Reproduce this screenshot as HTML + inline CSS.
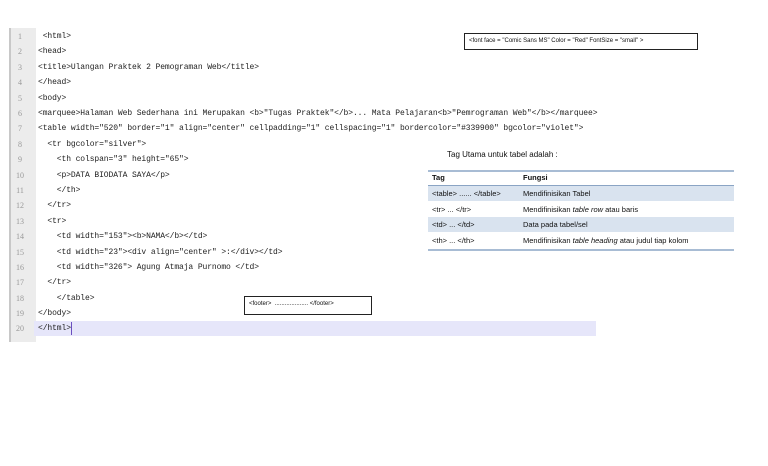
<!DOCTYPE html>
<html><head><meta charset="utf-8"><style>
body{margin:0;width:768px;height:466px;background:#fff;position:relative;overflow:hidden;font-family:"Liberation Sans",sans-serif}
.gut{position:absolute;left:9px;top:28px;width:25px;height:314px;background:#ececec;border-left:2px solid #c8c8c8}
.hl{position:absolute;left:34px;top:321px;width:562px;height:15px;background:#e6e6fa}
.ln{position:absolute;left:11px;width:18px;text-align:center;font:8px "Liberation Serif",serif;color:#999}
.cd{position:absolute;left:38px;font:8px "Liberation Mono",monospace;letter-spacing:-0.1px;color:#222;white-space:pre}
.box{position:absolute;border:1px solid #222;font-size:6px;color:#111;white-space:pre;box-sizing:border-box;padding:4px 4px}
.t{position:absolute;font-size:7.5px;color:#111;white-space:pre}
.row{position:absolute;left:428px;width:306px}
</style></head><body>
<div class="gut"></div>
<div class="hl"></div>
<div style="position:absolute;left:71px;top:322px;width:1px;height:13px;background:#6a4fc0"></div>
<div class="ln" style="top:32px">1</div><div class="cd" style="top:32px"> &lt;html&gt;</div>
<div class="ln" style="top:47px">2</div><div class="cd" style="top:47px">&lt;head&gt;</div>
<div class="ln" style="top:63px">3</div><div class="cd" style="top:63px">&lt;title&gt;Ulangan Praktek 2 Pemograman Web&lt;/title&gt;</div>
<div class="ln" style="top:78px">4</div><div class="cd" style="top:78px">&lt;/head&gt;</div>
<div class="ln" style="top:94px">5</div><div class="cd" style="top:94px">&lt;body&gt;</div>
<div class="ln" style="top:109px">6</div><div class="cd" style="top:109px">&lt;marquee&gt;Halaman Web Sederhana ini Merupakan &lt;b&gt;"Tugas Praktek"&lt;/b&gt;... Mata Pelajaran&lt;b&gt;"Pemrograman Web"&lt;/b&gt;&lt;/marquee&gt;</div>
<div class="ln" style="top:124px">7</div><div class="cd" style="top:124px">&lt;table width="520" border="1" align="center" cellpadding="1" cellspacing="1" bordercolor="#339900" bgcolor="violet"&gt;</div>
<div class="ln" style="top:140px">8</div><div class="cd" style="top:140px">  &lt;tr bgcolor="silver"&gt;</div>
<div class="ln" style="top:155px">9</div><div class="cd" style="top:155px">    &lt;th colspan="3" height="65"&gt;</div>
<div class="ln" style="top:171px">10</div><div class="cd" style="top:171px">    &lt;p&gt;DATA BIODATA SAYA&lt;/p&gt;</div>
<div class="ln" style="top:186px">11</div><div class="cd" style="top:186px">    &lt;/th&gt;</div>
<div class="ln" style="top:201px">12</div><div class="cd" style="top:201px">  &lt;/tr&gt;</div>
<div class="ln" style="top:217px">13</div><div class="cd" style="top:217px">  &lt;tr&gt;</div>
<div class="ln" style="top:232px">14</div><div class="cd" style="top:232px">    &lt;td width="153"&gt;&lt;b&gt;NAMA&lt;/b&gt;&lt;/td&gt;</div>
<div class="ln" style="top:248px">15</div><div class="cd" style="top:248px">    &lt;td width="23"&gt;&lt;div align="center" &gt;:&lt;/div&gt;&lt;/td&gt;</div>
<div class="ln" style="top:263px">16</div><div class="cd" style="top:263px">    &lt;td width="326"&gt; Agung Atmaja Purnomo &lt;/td&gt;</div>
<div class="ln" style="top:278px">17</div><div class="cd" style="top:278px">  &lt;/tr&gt;</div>
<div class="ln" style="top:294px">18</div><div class="cd" style="top:294px">    &lt;/table&gt;</div>
<div class="ln" style="top:309px">19</div><div class="cd" style="top:309px">&lt;/body&gt;</div>
<div class="ln" style="top:324px">20</div><div class="cd" style="top:324px">&lt;/html&gt;</div>

<div class="box" style="left:464px;top:33px;width:234px;height:17px">&lt;font face = "Comic Sans MS" Color = "Red" FontSize = "small" &gt;</div>
<div class="box" style="left:244px;top:296px;width:128px;height:19px">&lt;footer&gt;  .................... &lt;/footer&gt;</div>

<div class="t" style="left:447px;top:150px;font-size:8px">Tag Utama untuk tabel adalah :</div>
<div class="row" style="top:170px;height:2px;background:#a8bcd4"></div>
<div class="t" style="left:432px;top:173px;font-weight:bold">Tag</div>
<div class="t" style="left:523px;top:173px;font-weight:bold">Fungsi</div>
<div class="row" style="top:185px;height:1px;background:#8aa4c4"></div>
<div class="row" style="top:186px;height:15px;background:#d9e3ef"></div>
<div class="t" style="left:432px;top:189px">&lt;table&gt; ...... &lt;/table&gt;</div>
<div class="t" style="left:523px;top:189px">Mendifinisikan Tabel</div>
<div class="t" style="left:432px;top:205px">&lt;tr&gt; ... &lt;/tr&gt;</div>
<div class="t" style="left:523px;top:205px">Mendifinisikan <i>table row</i> atau baris</div>
<div class="row" style="top:217px;height:15px;background:#d9e3ef"></div>
<div class="t" style="left:432px;top:220px">&lt;td&gt; ... &lt;/td&gt;</div>
<div class="t" style="left:523px;top:220px">Data pada tabel/sel</div>
<div class="t" style="left:432px;top:236px">&lt;th&gt; ... &lt;/th&gt;</div>
<div class="t" style="left:523px;top:236px">Mendifinisikan <i>table heading</i> atau judul tiap kolom</div>
<div class="row" style="top:249px;height:2px;background:#a8bcd4"></div>
</body></html>
